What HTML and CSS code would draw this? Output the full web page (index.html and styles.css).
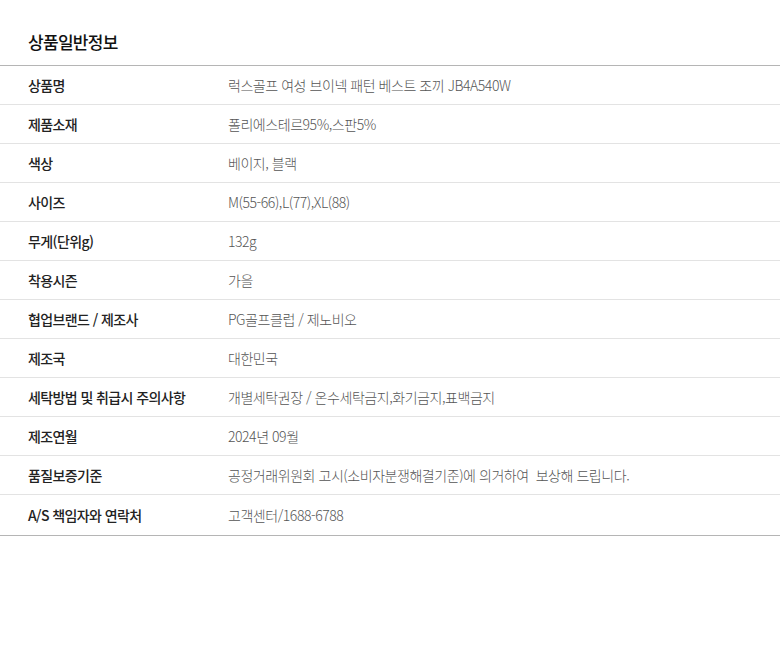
FILE: index.html
```html
<!DOCTYPE html>
<html lang="ko">
  <head>
    <meta charset="UTF-8" />
    <meta name="viewport" content="width=device-width, initial-scale=1.0" />
    <title>상품일반정보</title>

    <link rel="stylesheet" href="styles.css">
  </head>
  <body>
    <h2 class="info-title">상품일반정보</h2>

    <table class="info-table">
      <tr>
        <th>상품명</th>
        <td>럭스골프 여성 브이넥 패턴 베스트 조끼 JB4A540W</td>
      </tr>
      <tr>
        <th>제품소재</th>
        <td>폴리에스테르95%,스판5%</td>
      </tr>
      <tr>
        <th>색상</th>
        <td>베이지, 블랙</td>
      </tr>
      <tr>
        <th>사이즈</th>
        <td>M(55-66),L(77),XL(88)</td>
      </tr>
      <tr>
        <th>무게(단위g)</th>
        <td>132g</td>
      </tr>
      <tr>
        <th>착용시즌</th>
        <td>가을</td>
      </tr>
      <tr>
        <th>협업브랜드 / 제조사</th>
        <td>PG골프클럽 / 제노비오</td>
      </tr>
      <tr>
        <th>제조국</th>
        <td>대한민국</td>
      </tr>
      <tr>
        <th>세탁방법 및 취급시 주의사항</th>
        <td>개별세탁권장 / 온수세탁금지,화기금지,표백금지</td>
      </tr>
      <tr>
        <th>제조연월</th>
        <td>2024년 09월</td>
      </tr>
      <tr>
        <th>품질보증기준</th>
        <td>공정거래위원회 고시(소비자분쟁해결기준)에 의거하여&nbsp; 보상해 드립니다.</td>
      </tr>
      <tr>
        <th>A/S 책임자와 연락처</th>
        <td>고객센터/1688-6788</td>
      </tr>
    </table>
  </body>
</html>
```

FILE: styles.css
```css
body {
  margin: 0;
  font-family: "Noto Sans CJK KR", "Noto Sans", sans-serif;
  background: #fff;
  color: #222;
}

.info-title {
  margin: 0;
  padding: 31px 28px 12px;
  font-size: 17px;
  font-weight: 500;
  line-height: 22px;
  letter-spacing: -0.7px;
  color: #111;
}

.info-table {
  width: 100%;
  border-collapse: collapse;
  border-top: 1px solid #b5b5b5;
  border-bottom: 1px solid #b5b5b5;
}

.info-table th,
.info-table td {
  height: 38px;
  padding: 0;
  font-size: 14px;
  line-height: 20px;
  text-align: left;
  vertical-align: middle;
  border-bottom: 1px solid #e3e3e3;
}

.info-table th {
  width: 200px;
  padding-left: 28px;
  font-weight: 500;
  letter-spacing: -0.6px;
  color: #222;
}

.info-table td {
  font-weight: 300;
  letter-spacing: -0.45px;
  color: #555;
}

.info-table tr:last-child th,
.info-table tr:last-child td {
  height: 40px;
  border-bottom: none;
}
```
